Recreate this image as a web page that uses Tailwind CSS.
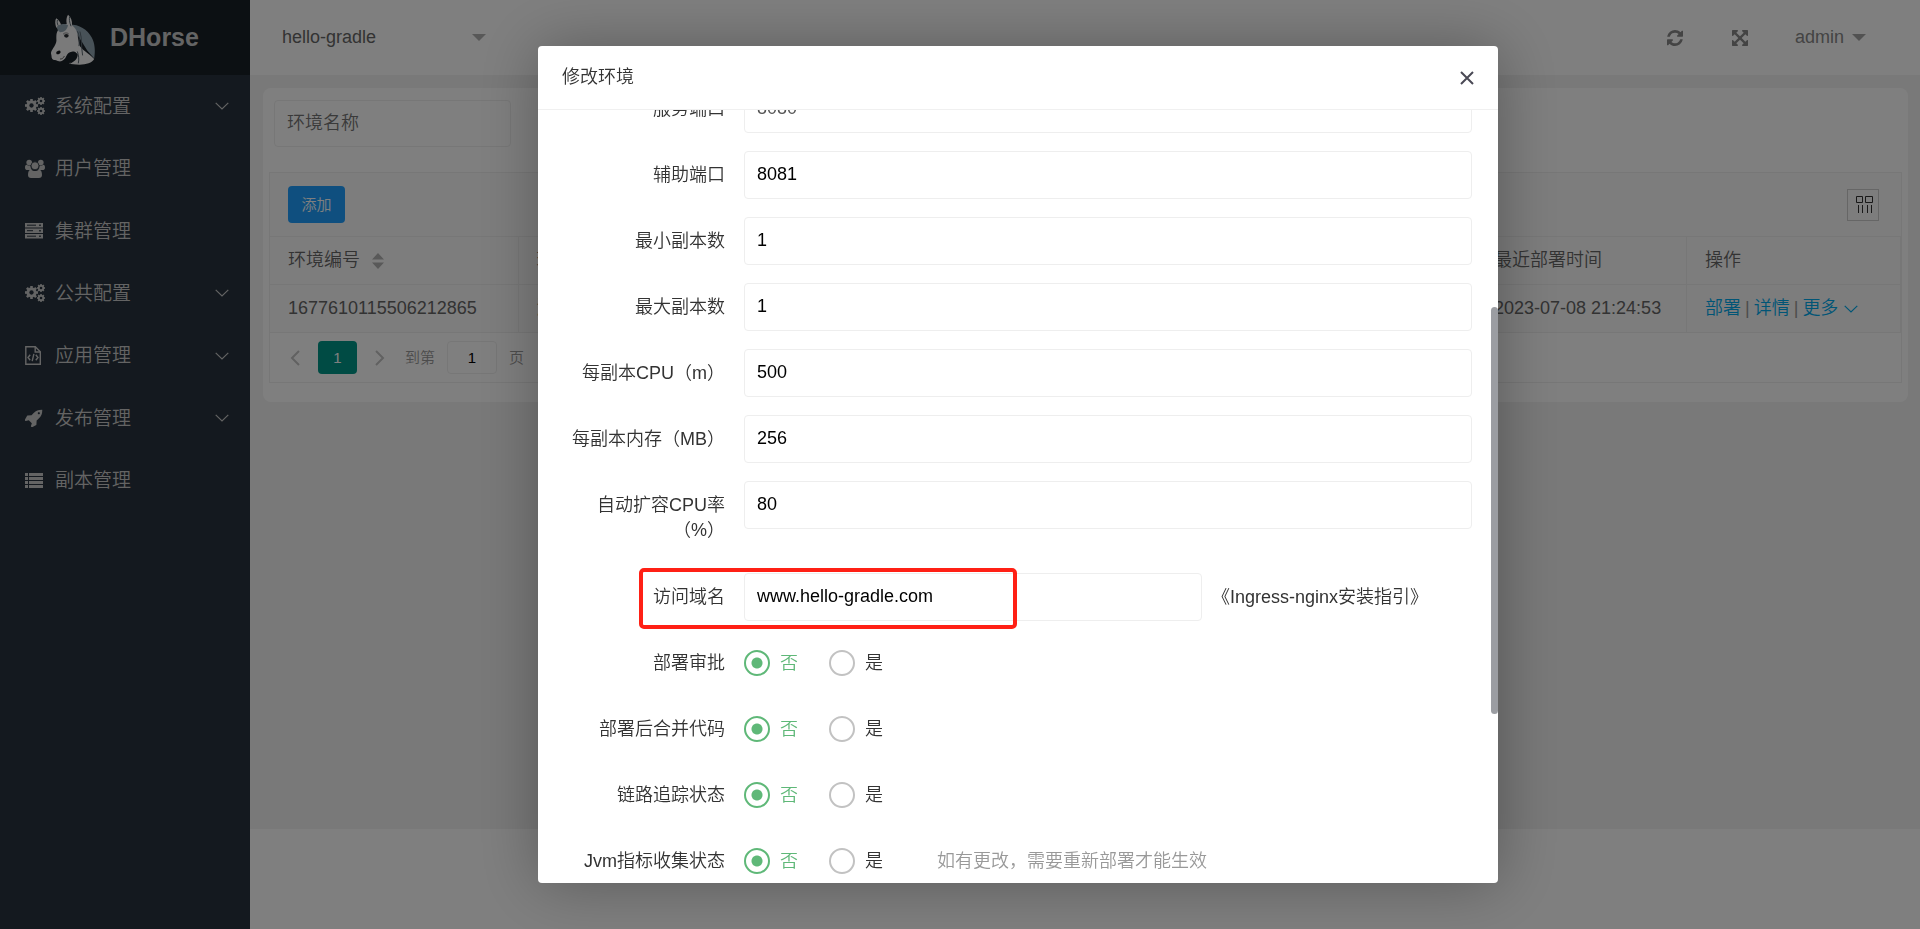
<!DOCTYPE html>
<html lang="zh-CN">
<head>
<meta charset="utf-8">
<title>DHorse</title>
<script src="https://cdn.jsdelivr.net/npm/@tailwindcss/browser@4"></script>
</head>
<body class="min-h-screen overflow-hidden bg-white font-['Liberation_Sans','Noto_Sans_CJK_SC',sans-serif] text-[18px] leading-[25px] font-[350] text-[#333]">
<svg class="hidden" aria-hidden="true">
  <symbol id="gear" viewBox="-10 -10 20 20">
    <g fill="currentColor">
      <rect x="-2" y="-10" width="4" height="20"/>
      <rect x="-2" y="-10" width="4" height="20" transform="rotate(45)"/>
      <rect x="-2" y="-10" width="4" height="20" transform="rotate(90)"/>
      <rect x="-2" y="-10" width="4" height="20" transform="rotate(135)"/>
    </g>
    <circle r="5.5" fill="none" stroke="currentColor" stroke-width="4.6"/>
    <circle r="3.3" fill="#28333e"/>
  </symbol>
  <symbol id="cogs" viewBox="0 0 20 18">
    <use href="#gear" x="0" y="2" width="13" height="13"/>
    <use href="#gear" x="12" y="0" width="8" height="8"/>
    <use href="#gear" x="12" y="10" width="8" height="8"/>
  </symbol>
  <symbol id="down" viewBox="0 0 14 8">
    <path d="M.7.9 7 7 13.300.9" fill="none" stroke="currentColor" stroke-width="1.200"/>
  </symbol>
  <symbol id="caret" viewBox="0 0 14 7"><path d="M0 0h14L7 7z" fill="currentColor"/></symbol>
</svg>

<div class="flex min-h-screen">
  <aside class="w-[250px] shrink-0 bg-[#28333e] text-[#c8c8c8]">
    <div class="flex h-[75px] items-center bg-[#192027] pl-[50px]">
      <svg class="mt-[3px] h-[51px] w-[46px]" viewBox="150 40 138 154" aria-hidden="true">
        <path d="M208 72C238 72 262 86 276 112c9 17 11 40 7 62L262 150 226 92z" fill="#91a5b1"/>
        <path d="M168 80c-3-10-4-19 0-27 8 5 13 12 15 20l17-3c-2-12-1-20 4-28 9 7 13 18 12 32 10 8 18 20 18 38l4 20c5 16 27 24 45 44-6 11-24 17-44 17-14 0-25-1-32-4 14-5 22-14 24-28-5-9-8-9-16-7-8 1-12 5-16 13-4 10-12 17-22 16-6-1-9-4-12-4-8 1-11-5-11-13-1-5-2-6-1-11 4-10 15-22 16-34 0-12-2-25 7-35z" fill="#f4f4f4"/>
        <path d="M171 78c8-9 24-10 33-4-3 12-9 21-24 21-7-4-10-10-9-17z" fill="#91a5b1"/>
        <path d="M232 92c8 14 6 30 5 45m-5 16c4 12 6 22 3 36m5-96c7 22 3 44 8 72M213 77c-5-13-6-22-4-30m-35 28c-3-6-3-12-2-17" fill="none" stroke="#59666f" stroke-width="3"/>
        <path d="M209 190c14-5 25-15 24-29-6-5-14-3-22 1 3 10 3 21-2 28z" fill="#192027"/>
        <ellipse cx="199" cy="106" rx="7" ry="5.500" fill="#2a2f33"/>
        <path d="M189 101c5-5 12-5 17-1" fill="none" stroke="#555" stroke-width="2"/>
        <ellipse cx="175" cy="156" rx="7" ry="5" transform="rotate(-25 175 156)" fill="#15191c"/>
        <path d="M180 176c6 0 10-3 13-9" fill="none" stroke="#444" stroke-width="2.500"/>
      </svg>
      <h1 class="ml-[14px] text-[25px] font-bold">DHorse</h1>
    </div>
    <nav class="flex h-[437px] flex-col text-[19px]">
      <a href="#" class="flex flex-1 items-center pr-[21px] pl-[25px]"><svg class="h-[18px] w-5"><use href="#cogs"/></svg><span class="ml-[10px] flex-1">系统配置</span><svg class="h-2 w-[14px]"><use href="#down"/></svg></a>
      <a href="#" class="flex flex-1 items-center pr-[21px] pl-[25px]">
        <svg class="h-5 w-5" viewBox="0 0 20 20" fill="currentColor"><circle cx="4.200" cy="3.600" r="2.800"/><circle cx="15.800" cy="3.600" r="2.800"/><path d="M0 8.500c0-2 1-3 2-2.500 2 1 3 1 3.500.500 0 2 .5 4 1.500 4.500H2.500C1 11 0 10.500 0 8.500zM20 8.500c0-2-1-3-2-2.500-2 1-3 1-3.500.500 0 2-.5 4-1.500 4.500h4.500c1.500 0 2.500-.5 2.500-2.500z"/><circle cx="10" cy="6.800" r="4" stroke="#28333e" stroke-width=".8"/><path d="M3 16c0-3.500 1-5.300 3.200-5.300 1.200.8 2.300 1.300 3.800 1.300s2.600-.5 3.800-1.300C16 10.700 17 12.500 17 16c0 2-1.200 3-3 3H6c-1.800 0-3-1-3-3z"/></svg>
        <span class="ml-[10px] flex-1">用户管理</span></a>
      <a href="#" class="flex flex-1 items-center pr-[21px] pl-[25px]">
        <svg class="h-4 w-[18px]" viewBox="0 0 18 16"><path d="M0 0h18v4.500H0zM0 5.500h18V10H0zM0 11h18v4.500H0z" fill="currentColor"/><path d="M2 2.200h9M2 7.700h6M2 13.200h9" stroke="#28333e" stroke-width="1"/><path d="M14.200 2.200h1.600M14.200 7.700h1.600M14.200 13.200h1.600" stroke="#28333e" stroke-width="1.500"/></svg>
        <span class="ml-3 flex-1">集群管理</span></a>
      <a href="#" class="flex flex-1 items-center pr-[21px] pl-[25px]"><svg class="h-[18px] w-5"><use href="#cogs"/></svg><span class="ml-[10px] flex-1">公共配置</span><svg class="h-2 w-[14px]"><use href="#down"/></svg></a>
      <a href="#" class="flex flex-1 items-center pr-[21px] pl-[25px]">
        <svg class="h-[19px] w-4" viewBox="0 0 16 19" fill="none" stroke="currentColor" stroke-width="1.400"><path d="M.8.8h9.500l5 5v12.400H.8z"/><path d="M10.200.8v5.200h5.200M5.200 8.700 3 11.500l2.200 2.800M10.800 8.700l2.200 2.800-2.200 2.800M8.900 7.800l-1.700 7.400"/></svg>
        <span class="ml-[14px] flex-1">应用管理</span><svg class="h-2 w-[14px]"><use href="#down"/></svg></a>
      <a href="#" class="flex flex-1 items-center pr-[21px] pl-[25px]">
        <svg class="h-[18px] w-[18px]" viewBox="64 64 1664 1664" fill="currentColor"><path d="M1440 448q0-40-28-68t-68-28-68 28-28 68 28 68 68 28 68-28 28-68zm224-288q0 249-75.500 430.500t-253.500 360.500q-81 80-195 176l-20 379q-2 16-16 26l-384 224q-7 4-16 4-12 0-23-9l-64-64q-13-14-8-32l85-276-281-281-276 85q-3 1-9 1-14 0-23-9l-64-64q-17-19-5-39l224-384q10-14 26-16l379-20q96-114 176-195 188-187 358-258t431-71q14 0 24 9.500t10 22.500z"/></svg>
        <span class="ml-3 flex-1">发布管理</span><svg class="h-2 w-[14px]"><use href="#down"/></svg></a>
      <a href="#" class="flex flex-1 items-center pr-[21px] pl-[25px]">
        <svg class="h-4 w-[18px]" viewBox="0 0 18 16" fill="currentColor"><path d="M0 0h3v3H0zM4 0h14v3H4zM0 4h3v3H0zM4 4h14v3H4zM0 8h3v3H0zM4 8h14v3H4zM0 12h3v3H0zM4 12h14v3H4z"/></svg>
        <span class="ml-3 flex-1">副本管理</span></a>
    </nav>
  </aside>

  <div class="flex min-w-0 flex-1 flex-col">
    <header class="flex h-[75px] items-center justify-between bg-white pr-[54px] pl-8">
      <div class="flex items-center">
        <select aria-label="应用" class="h-12 w-[190px] appearance-none bg-transparent text-[#666] outline-none"><option>hello-gradle</option></select>
        <svg class="h-[7px] w-[14px] text-[#b0b0b0]"><use href="#caret"/></svg>
      </div>
      <div class="flex items-center text-[#888]">
        <button type="button" aria-label="刷新"><svg class="h-4 w-4" viewBox="128 128 1536 1536" fill="currentColor"><path d="M1639 1056q0 5-1 7-64 268-268 434.500t-478 166.500q-146 0-282.500-55t-243.500-157l-129 129q-19 19-45 19t-45-19-19-45v-448q0-26 19-45t45-19h448q26 0 45 19t19 45-19 45l-137 137q71 66 161 102t187 36q134 0 250-65t186-179q11-17 53-117 8-23 30-23h192q13 0 22.500 9.500t9.500 22.500zm25-800v448q0 26-19 45t-45 19h-448q-26 0-45-19t-19-45 19-45l138-138q-148-137-349-137-134 0-250 65t-186 179q-11 17-53 117-8 23-30 23h-199q-13 0-22.500-9.500t-9.500-22.500v-7q65-268 270-434.500t480-166.500q146 0 284 55.500t245 156.500l130-129q19-19 45-19t45 19 19 45z"/></svg></button>
        <button type="button" aria-label="全屏" class="ml-[49px]"><svg class="h-4 w-4" viewBox="128 128 1536 1536" fill="currentColor"><path d="M1411 541l-355 355 355 355 144-144q29-31 70-14 39 17 39 59v448q0 26-19 45t-45 19h-448q-42 0-59-40-17-39 14-69l144-144-355-355-355 355 144 144q31 30 14 69-17 40-59 40h-448q-26 0-45-19t-19-45v-448q0-42 40-59 39-17 69 14l144 144 355-355-355-355-144 144q-19 19-45 19-12 0-24-5-40-17-40-59v-448q0-26 19-45t45-19h448q42 0 59 40 17 39-14 69l-144 144 355 355 355-355-144-144q-31-30-14-69 17-40 59-40h448q26 0 45 19t19 45v448q0 42-39 59-13 5-25 5-26 0-45-19z"/></svg></button>
        <button type="button" class="ml-[47px] flex items-center gap-2">admin<svg class="h-[7px] w-[14px] text-[#a5a5a5]"><use href="#caret"/></svg></button>
      </div>
    </header>

    <main class="flex-1 bg-[#f2f2f2] pt-[13px] pr-3 pl-[13px]">
      <section class="rounded-lg bg-white px-[6px] pt-3 pb-[19px]">
        <input type="text" aria-label="环境名称" placeholder="环境名称" class="ml-[5px] h-[47px] w-[237px] rounded-sm border border-[#eee] px-3 outline-none placeholder:text-[#757575]">
        <div class="mt-[25px] border border-[#eee]">
          <div class="flex h-[63px] items-center justify-between bg-[#fbfbfb] pr-[22px] pl-[18px]">
            <button type="button" class="h-[37px] w-[57px] rounded-sm bg-[#1e9fff] text-[15px] text-white">添加</button>
            <button type="button" aria-label="筛选列" class="flex h-8 w-8 items-center justify-center border border-[#ccc]"><svg class="ml-[3px] h-[17px] w-[17px]" viewBox="0 0 17 17" fill="none" stroke="#333" stroke-width="1"><path d="M.5.500h6v6h-6zM9.500.500h7v6h-7zM2.500 9v8M6.500 9v8M11.500 9v8M15.500 9v8"/></svg></button>
          </div>
          <table class="w-full table-fixed border-collapse bg-[#fbfbfb] text-left text-[#666]">
            <colgroup><col class="w-[248px]"><col><col class="w-[211px]"><col class="w-[214px]"></colgroup>
            <thead>
              <tr class="h-12 border-y border-[#eee]">
                <th class="border-r border-[#eee] pl-[18px] font-[350]"><span class="flex items-center gap-3">环境编号<svg class="h-4 w-3" viewBox="0 0 12 16" fill="#b2b2b2"><path d="M0 6.500h12L6 0zM0 9.500h12L6 16z"/></svg></span></th>
                <th class="border-r border-[#eee] pl-[18px] font-[350]">环境名称</th>
                <th class="border-r border-[#eee] pl-[18px] font-[350]">最近部署时间</th>
                <th class="border-r border-[#eee] pl-[18px] font-[350]">操作</th>
              </tr>
            </thead>
            <tbody>
              <tr class="h-12 border-b border-[#eee]">
                <td class="border-r border-[#eee] pl-[18px]">1677610115506212865</td>
                <td class="border-r border-[#eee] pl-[18px]">测试</td>
                <td class="border-r border-[#eee] pl-[18px] whitespace-nowrap">2023-07-08 21:24:53</td>
                <td class="border-r border-[#eee] pl-[18px] whitespace-nowrap"><span class="flex items-center gap-1 text-[#999]"><a href="#" class="text-[#01aaed]">部署</a>|<a href="#" class="text-[#01aaed]">详情</a>|<a href="#" class="flex items-center gap-[6px] text-[#01aaed]">更多<svg class="h-2 w-[14px]"><use href="#down"/></svg></a></span></td>
              </tr>
            </tbody>
          </table>
          <div class="flex h-[49px] items-center pl-5 text-[15px] text-[#999]">
            <button type="button" aria-label="上一页"><svg class="h-4 w-[10px]" viewBox="0 0 10 16" fill="none" stroke="#c2c2c2" stroke-width="2"><path d="M9 1 2 8l7 7"/></svg></button>
            <button type="button" class="ml-[18px] h-[33px] w-[39px] rounded-sm bg-[#009688] text-white">1</button>
            <button type="button" aria-label="下一页" class="ml-[18px]"><svg class="h-4 w-[10px]" viewBox="0 0 10 16" fill="none" stroke="#c2c2c2" stroke-width="2"><path d="m1 1 7 7-7 7"/></svg></button>
            <label for="page" class="ml-5">到第</label>
            <input id="page" type="text" value="1" class="mx-3 h-[33px] w-[50px] rounded-sm border border-[#eee] text-center text-black outline-none">
            <span>页</span>
          </div>
        </div>
      </section>
    </main>
    <div class="h-[100px] bg-white"></div>
  </div>
</div>

<div class="fixed inset-0 flex justify-center bg-black/50 pl-[116px]">
  <div role="dialog" aria-labelledby="dlg" class="relative my-[46px] flex w-[50vw] flex-col rounded-sm bg-white shadow-[1px_1px_62px_rgba(0,0,0,0.3)]">
    <div class="flex h-16 shrink-0 items-center justify-between border-b border-[#f0f0f0] px-6">
      <h2 id="dlg">修改环境</h2>
      <button type="button" aria-label="关闭"><svg class="h-[14px] w-[14px]" viewBox="0 0 14 14" stroke="#4a4955" stroke-width="2"><path d="m1 1 12 12M13 1 1 13"/></svg></button>
    </div>
    <form class="min-h-0 flex-1 overflow-hidden pr-[26px] pl-6">
      <div class="-mt-[25px] flex flex-col gap-[18px]">
        <div class="flex items-start"><label for="f0" class="w-[182px] shrink-0 pt-3 pr-[19px] pb-[11px] text-right">服务端口</label><input id="f0" type="text" value="8080" class="h-12 min-w-0 flex-1 rounded-sm border border-[#eee] px-3 pb-0.5 text-[#555] outline-none"></div>
        <div class="flex items-start"><label for="f1" class="w-[182px] shrink-0 pt-3 pr-[19px] pb-[11px] text-right">辅助端口</label><input id="f1" type="text" value="8081" class="h-12 min-w-0 flex-1 rounded-sm border border-[#eee] px-3 pb-0.5 text-black outline-none"></div>
        <div class="flex items-start"><label for="f2" class="w-[182px] shrink-0 pt-3 pr-[19px] pb-[11px] text-right">最小副本数</label><input id="f2" type="text" value="1" class="h-12 min-w-0 flex-1 rounded-sm border border-[#eee] px-3 pb-0.5 text-black outline-none"></div>
        <div class="flex items-start"><label for="f3" class="w-[182px] shrink-0 pt-3 pr-[19px] pb-[11px] text-right">最大副本数</label><input id="f3" type="text" value="1" class="h-12 min-w-0 flex-1 rounded-sm border border-[#eee] px-3 pb-0.5 text-black outline-none"></div>
        <div class="flex items-start"><label for="f4" class="w-[182px] shrink-0 pt-3 pr-[19px] pb-[11px] text-right">每副本CPU（m）</label><input id="f4" type="text" value="500" class="h-12 min-w-0 flex-1 rounded-sm border border-[#eee] px-3 pb-0.5 text-black outline-none"></div>
        <div class="flex items-start"><label for="f5" class="w-[182px] shrink-0 pt-3 pr-[19px] pb-[11px] text-right">每副本内存（MB）</label><input id="f5" type="text" value="256" class="h-12 min-w-0 flex-1 rounded-sm border border-[#eee] px-3 pb-0.5 text-black outline-none"></div>
        <div class="flex items-start"><label for="f6" class="w-[182px] shrink-0 pt-3 pr-[19px] pb-3 text-right">自动扩容CPU率（%）</label><input id="f6" type="text" value="80" class="h-12 min-w-0 flex-1 rounded-sm border border-[#eee] px-3 pb-0.5 text-black outline-none"></div>
        <div class="relative flex items-start"><label for="f7" class="w-[182px] shrink-0 pt-3 pr-[19px] pb-[11px] text-right">访问域名</label><input id="f7" type="text" value="www.hello-gradle.com" class="h-12 w-[458px] rounded-sm border border-[#eee] px-3 pb-0.5 text-black outline-none"><a href="#" class="ml-[10px] pt-3 whitespace-nowrap">《Ingress-nginx安装指引》</a>
          <div class="pointer-events-none absolute -top-[5px] left-[77px] h-[61px] w-[378px] rounded-[5px] border-4 border-[#ff2015]"></div>
        </div>
        <div role="radiogroup" class="flex h-12 items-center" aria-labelledby="r1"><span id="r1" class="w-[182px] shrink-0 pr-[19px] text-right">部署审批</span>
          <label class="flex items-center gap-[10px] text-[#5fb878]"><input type="radio" name="a" checked class="h-[26px] w-[26px] appearance-none rounded-full border-2 border-[#5fb878] bg-[radial-gradient(circle,#5fb878_5px,transparent_6px)]">否</label>
          <label class="ml-[31px] flex items-center gap-[10px]"><input type="radio" name="a" class="h-[26px] w-[26px] appearance-none rounded-full border-2 border-[#c2c2c2]">是</label></div>
        <div role="radiogroup" class="flex h-12 items-center" aria-labelledby="r2"><span id="r2" class="w-[182px] shrink-0 pr-[19px] text-right">部署后合并代码</span>
          <label class="flex items-center gap-[10px] text-[#5fb878]"><input type="radio" name="b" checked class="h-[26px] w-[26px] appearance-none rounded-full border-2 border-[#5fb878] bg-[radial-gradient(circle,#5fb878_5px,transparent_6px)]">否</label>
          <label class="ml-[31px] flex items-center gap-[10px]"><input type="radio" name="b" class="h-[26px] w-[26px] appearance-none rounded-full border-2 border-[#c2c2c2]">是</label></div>
        <div role="radiogroup" class="flex h-12 items-center" aria-labelledby="r3"><span id="r3" class="w-[182px] shrink-0 pr-[19px] text-right">链路追踪状态</span>
          <label class="flex items-center gap-[10px] text-[#5fb878]"><input type="radio" name="c" checked class="h-[26px] w-[26px] appearance-none rounded-full border-2 border-[#5fb878] bg-[radial-gradient(circle,#5fb878_5px,transparent_6px)]">否</label>
          <label class="ml-[31px] flex items-center gap-[10px]"><input type="radio" name="c" class="h-[26px] w-[26px] appearance-none rounded-full border-2 border-[#c2c2c2]">是</label></div>
        <div role="radiogroup" class="flex h-12 items-center" aria-labelledby="r4"><span id="r4" class="w-[182px] shrink-0 pr-[19px] text-right">Jvm指标收集状态</span>
          <label class="flex items-center gap-[10px] text-[#5fb878]"><input type="radio" name="d" checked class="h-[26px] w-[26px] appearance-none rounded-full border-2 border-[#5fb878] bg-[radial-gradient(circle,#5fb878_5px,transparent_6px)]">否</label>
          <label class="ml-[31px] flex items-center gap-[10px]"><input type="radio" name="d" class="h-[26px] w-[26px] appearance-none rounded-full border-2 border-[#c2c2c2]">是</label>
          <span class="ml-[54px] text-[#999]">如有更改，需要重新部署才能生效</span></div>
      </div>
    </form>
    <div class="absolute top-[261px] right-0 h-[407px] w-[7px] rounded-full bg-[#9b9da2]"></div>
  </div>
</div>
</body>
</html>
